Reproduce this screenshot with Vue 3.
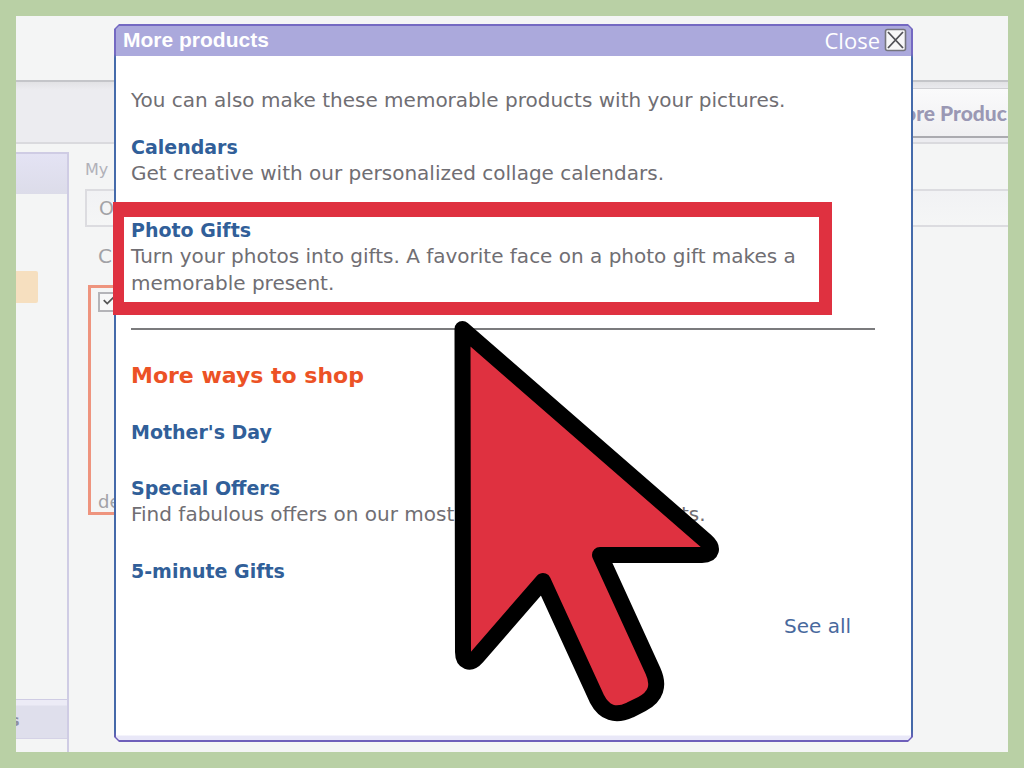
<script setup>
const products = [
  { name: 'Calendars', text: 'Get creative with our personalized collage calendars.' },
  { name: 'Photo Gifts', text: 'Turn your photos into gifts. A favorite face on a photo gift makes a memorable present.', marked: true },
]
const shops = [
  { name: "Mother's Day" },
  { name: 'Special Offers', text: 'Find fabulous offers on our most creative photo products.' },
  { name: '5-minute Gifts' },
]
</script>

<template>
  <div class="frame">
    <div class="page">
      <div class="banner"></div>
      <nav class="nav"><a class="tab" href="#">ore Produc</a></nav>
      <div class="body">
        <aside class="side">
          <div class="side-head"></div>
          <div class="side-mark"></div>
          <div class="side-foot">s</div>
        </aside>
        <main class="main">
          <div class="crumb">My</div>
          <div class="toolbar">O</div>
          <div class="caption">C</div>
          <div class="card">
            <label class="tick"><input type="checkbox" checked aria-label="Select project" />
              <svg viewBox="0 0 16 16" aria-hidden="true"><path d="M2 7 L6 11 L14 3" /></svg>
            </label>
            <span>de</span>
          </div>
        </main>
      </div>
    </div>

    <section class="dialog" role="dialog" aria-labelledby="dialog-title">
      <div class="shell"><div class="shell-in"></div></div>
      <header class="bar">
        <h1 id="dialog-title">More products</h1>
        <button class="close" type="button">
          <span>Close</span>
          <svg viewBox="0 0 24 24" aria-hidden="true">
            <rect x="1.5" y="1.5" width="20" height="21" rx="2" fill="#f7f7f8" stroke="#74747c" stroke-width="1.6" />
            <path d="M4 4 L19 20 M19 4 L4 20" stroke="#505056" stroke-width="1.8" fill="none" />
          </svg>
        </button>
      </header>
      <div class="content">
        <p class="intro">You can also make these memorable products with your pictures.</p>
        <article v-for="p in products" :key="p.name" class="item" :class="{ marked: p.marked }">
          <h2><a href="#">{{ p.name }}</a></h2>
          <p>{{ p.text }}</p>
        </article>
        <hr />
        <h2 class="ways">More ways to shop</h2>
        <article v-for="s in shops" :key="s.name" class="shop">
          <h2><a href="#">{{ s.name }}</a></h2>
          <p v-if="s.text">{{ s.text }}</p>
        </article>
        <a class="all" href="#">See all</a>
      </div>
    </section>

    <svg class="cursor" viewBox="450 316 274 410" aria-hidden="true">
      <path d="M462.5 329 L706 541 C714 548 712 555 702 555 L600 555 L653 671 Q663 693 642 704 L630 710 Q608 720 597 699 L543 581 L477 657 C470 665 463 662 463 652 Z" />
    </svg>
  </div>
</template>

<style>
body { margin: 0; }
</style>

<style scoped>
* { box-sizing: border-box; }
h1, h2, p { margin: 0; }
a { color: inherit; text-decoration: none; }
.frame {
  position: relative;
  min-height: 100vh;
  padding: 16px;
  display: flex;
  overflow: hidden;
  background: #b9d0a5;
  font-family: "DejaVu Sans", Verdana, sans-serif;
  font-size: 20px;
}
.page { flex: 1; min-width: 0; display: flex; flex-direction: column; overflow: hidden; background: #f4f5f5; }
.banner { height: 66px; border-bottom: 2px solid #c4c5c9; }
.nav {
  height: 62px;
  display: flex;
  justify-content: flex-end;
  align-items: flex-start;
  padding-top: 6px;
  background: linear-gradient(#e2e2e5, #ececf0 8px);
  border-bottom: 2px solid #dadade;
}
.tab {
  height: 50px;
  width: 104px;
  white-space: nowrap;
  border-top: 1px solid #d0d0d4;
  border-bottom: 2px solid #ababb0;
  background: linear-gradient(#fafafb, #f0f0f2);
  color: #9a98b4;
  font: 900 21px/48px Lato, sans-serif;
}
.body { flex: 1; display: flex; padding-top: 8px; }
.side { width: 53px; display: flex; flex-direction: column; border-right: 2px solid #cfcce4; border-top: 2px solid #cfcce4; }
.side-head { height: 40px; background: linear-gradient(#e4e3f4, #dcdce9); }
.side-mark { width: 22px; height: 32px; margin-top: 77px; background: #f6dfbf; border-radius: 0 2px 2px 0; }
.side-foot {
  height: 40px;
  margin-top: auto;
  margin-bottom: 13px;
  border-top: 1px solid #cfcce4;
  border-bottom: 1px solid #d5d3e6;
  background: linear-gradient(#ecebf6 5px, #dfdfec 6px);
  color: #8f8fa0;
  font: bold 16px/42px "DejaVu Sans", sans-serif;
  text-indent: -6px;
  overflow: hidden;
}
.main { flex: 1; padding: 8px 0 0 16px; color: #a2a2a6; }
.crumb { height: 29px; font-size: 16px; line-height: 20px; color: #b1b1b9; }
.toolbar { height: 38px; padding-left: 12px; border: 2px solid #dcdce0; border-right: 0; background: linear-gradient(#f1f2f4, #f5f6f6); font-size: 19px; line-height: 34px; }
.caption { height: 58px; padding: 17px 0 0 13px; line-height: 24px; }
.card {
  width: 400px;
  height: 230px;
  margin-left: 3px;
  padding: 4px 7px 0;
  border: 3px solid #ee947e;
  display: flex;
  flex-direction: column;
  justify-content: space-between;
  font-size: 18px;
}
.tick { position: relative; width: 21px; height: 21px; }
.tick input { appearance: none; width: 20px; height: 20px; margin: 0; border: 2px solid #b4b4b8; background: #f8f8f8; }
.tick svg { position: absolute; left: 4px; top: 2px; width: 14px; height: 14px; fill: none; stroke: #555; stroke-width: 2; }

.dialog { position: absolute; top: 24px; right: 111px; bottom: 26px; left: 114px; }
.shell {
  position: absolute;
  inset: 0;
  padding: 2px;
  background: linear-gradient(#7469c2 30px, #456bab 34px, #4569a9 calc(100% - 12px), #6e5fba calc(100% - 4px));
  clip-path: polygon(5px 0, calc(100% - 5px) 0, 100% 5px, 100% calc(100% - 5px), calc(100% - 5px) 100%, 5px 100%, 0 calc(100% - 5px), 0 5px);
}
.shell-in {
  height: 100%;
  background: linear-gradient(#aba9dc 30px, #fff 30px, #fff calc(100% - 5px), #e9e8f8 calc(100% - 4px));
  clip-path: polygon(3px 0, calc(100% - 3px) 0, 100% 3px, 100% calc(100% - 3px), calc(100% - 3px) 100%, 3px 100%, 0 calc(100% - 3px), 0 3px);
}
.bar { position: relative; height: 32px; padding: 0 5px 0 9px; display: flex; justify-content: space-between; align-items: center; color: #fff; }
.bar h1 { font: bold 21px/30px "Liberation Sans", Arial, sans-serif; }
.close {
  display: flex;
  align-items: center;
  gap: 4px;
  padding: 0;
  border: 0;
  background: none;
  color: #fff;
  font: 22px/28px "Open Sans", sans-serif;
}
.close svg { width: 24px; height: 24px; }
.content { position: relative; padding: 31px 38px 0 17px; color: #706e73; line-height: 27px; }
.intro { margin-bottom: 21px; }
h2 { font: bold 19px/25px "DejaVu Sans", Verdana, sans-serif; color: #315f99; }
.item { position: relative; margin-bottom: 31px; padding-right: 50px; }
.marked::before {
  content: "";
  position: absolute;
  inset: -16px 43px -18px -18px;
  border: solid #df3140;
  border-width: 15px 13px 13px 11px;
}
hr { margin: 0; border: 0; height: 2px; background: #7b7b7d; }
.ways { margin: 33px 0 32px; font-size: 22px; color: #ec5225; }
.shop { margin-bottom: 31px; }
.all { display: block; width: 68px; margin: -2px 23px 0 auto; color: #49699d; white-space: nowrap; }
.cursor { position: absolute; left: 450px; top: 316px; width: 274px; height: 410px; pointer-events: none; }
.cursor path { fill: #df3140; stroke: #000; stroke-width: 16; stroke-linejoin: round; }
</style>
